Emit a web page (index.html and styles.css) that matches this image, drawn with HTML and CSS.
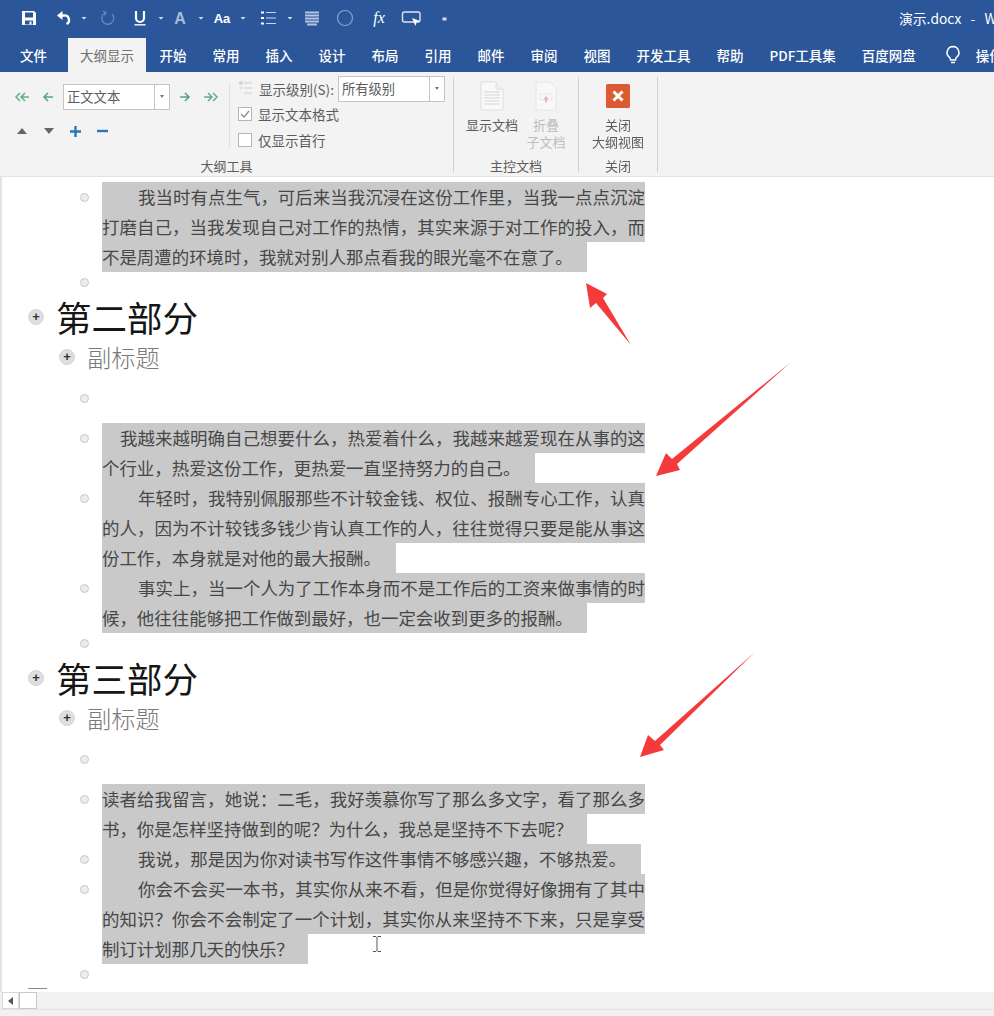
FILE: index.html
```html
<!DOCTYPE html>
<html lang="zh-CN">
<head>
<meta charset="utf-8">
<title>演示.docx - Word</title>
<link rel="stylesheet" href="styles.css">
</head>
<body>
<div class="app">
  <header class="titlebar">
    <svg class="qat" width="460" height="38" viewBox="0 0 460 38">
      <g fill="#fff">
        <path d="M22 11h12l2 2v12H22zM25 12.500v5h8v-5zM25 20.500v4h8v-4z" fill-rule="evenodd"/>
        <rect x="29.500" y="21.500" width="2" height="3" fill="#fff"/>
      </g>
      <path d="M57 15.500l5.500-4.500v9z" fill="#fff"/>
      <path d="M61 15.500h3a4.500 4.500 0 0 1 2.500 8.500" fill="none" stroke="#fff" stroke-width="2.300"/>
      <path d="M81.500 17h5l-2.500 2.500zM158.500 17h5l-2.500 2.500zM198.500 17h5l-2.500 2.500zM240.500 17h5l-2.500 2.500zM287.500 17h5l-2.500 2.500zM442.500 17.500h4v3h-4z" fill="#d5deee"/>
      <path d="M112 14a6 6 0 1 1-6-1.500M103 11l3 1.500-1.500 3" fill="none" stroke="#6a88ba" stroke-width="1.300"/>
      <path d="M136 11v7a4 4 0 0 0 8 0v-7" fill="none" stroke="#fff" stroke-width="2.200"/>
      <rect x="134.500" y="24" width="11" height="1.600" fill="#dfe7f3"/>
      <text x="180" y="23.500" class="qat-a">A</text>
      <text x="222" y="23" class="qat-aa">Aa</text>
      <path d="M261 11.500h3v2h-3zM261 17h3v2h-3zM261 22.500h3v2h-3z" fill="#fff"/>
      <path d="M266 12.500h10M266 18h10M266 23.500h10" stroke="#cdd8ea" stroke-width="1.200"/>
      <path d="M305 12.500h14M305 15.500h14M305 18.500h14M305 21.500h14M307 24.500h10" stroke="#b5c4dd" stroke-width="1.800"/>
      <circle cx="345" cy="18" r="7.500" fill="none" stroke="#8ba4cc" stroke-width="1.200"/>
      <text x="379" y="23" class="qat-fx">fx</text>
      <path d="M404.500 12h13.500a2 2 0 0 1 2 2v6a2 2 0 0 1-2 2h-13.500a2 2 0 0 1-2-2v-6a2 2 0 0 1 2-2z" fill="none" stroke="#dbe3f0" stroke-width="1.400"/>
      <path d="M412 18l8 3-3.500 1.500-1 3.500z" fill="#fff"/>
    </svg>
    <div class="doc-title">演示.docx&nbsp;&nbsp;-&nbsp;&nbsp;Word</div>
  </header>

  <nav class="tabs">
    <span class="tab">文件</span>
    <span class="tab tab-active">大纲显示</span>
    <span class="tab">开始</span>
    <span class="tab">常用</span>
    <span class="tab">插入</span>
    <span class="tab">设计</span>
    <span class="tab">布局</span>
    <span class="tab">引用</span>
    <span class="tab">邮件</span>
    <span class="tab">审阅</span>
    <span class="tab">视图</span>
    <span class="tab">开发工具</span>
    <span class="tab">帮助</span>
    <span class="tab">PDF工具集</span>
    <span class="tab">百度网盘</span>
    <span class="tab tab-search">
      <svg width="16" height="20" viewBox="0 0 16 20"><path d="M8 1.500a6 6 0 0 0-3.500 10.800c.8.8 1 1.500 1 2.700h5c0-1.200.2-1.900 1-2.700A6 6 0 0 0 8 1.500zM6 17.500h4" fill="none" stroke="#fff" stroke-width="1.500"/></svg>
      <span>操作说明搜索</span>
    </span>
  </nav>

  <section class="ribbon">
    <div class="group group-outline">
      <div class="group-body">
        <div class="col-levels">
          <div class="level-row">
            <span class="cell"><svg width="16" height="10" viewBox="0 0 16 10"><path d="M6 1L2 5l4 4M11 1L7 5l4 4M7 5h8" fill="none" stroke="#66ad86" stroke-width="1.500"/></svg></span>
            <span class="cell"><svg width="12" height="10" viewBox="0 0 12 10"><path d="M6 1L2 5l4 4M2 5h9" fill="none" stroke="#58a67c" stroke-width="1.600"/></svg></span>
            <div class="combo combo-style"><span class="combo-text">正文文本</span><span class="combo-btn"></span></div>
            <span class="cell"><svg width="12" height="10" viewBox="0 0 12 10"><path d="M6 1l4 4-4 4M10 5H1" fill="none" stroke="#58a67c" stroke-width="1.600"/></svg></span>
            <span class="cell"><svg width="16" height="10" viewBox="0 0 16 10"><path d="M10 1l4 4-4 4M5 1l4 4-4 4M9 5H1" fill="none" stroke="#66ad86" stroke-width="1.500"/></svg></span>
          </div>
          <div class="move-row">
            <span class="cell"><svg width="10" height="6" viewBox="0 0 10 6"><path d="M5 0l5 6H0z" fill="#666"/></svg></span>
            <span class="cell"><svg width="10" height="6" viewBox="0 0 10 6"><path d="M5 6l5-6H0z" fill="#666"/></svg></span>
            <span class="cell"><svg width="11" height="11" viewBox="0 0 11 11"><path d="M5.500 0v11M0 5.500h11" stroke="#2f74b5" stroke-width="2.400"/></svg></span>
            <span class="cell"><svg width="11" height="4" viewBox="0 0 11 4"><path d="M0 2h11" stroke="#2f74b5" stroke-width="2.400"/></svg></span>
          </div>
        </div>
        <div class="col-display">
          <div class="display-row">
            <svg class="level-icon" width="15" height="17" viewBox="0 0 15 17"><circle cx="3" cy="3" r="2" fill="#d4d4d4"/><path d="M6 3h8M6 8h8M6 13h8" stroke="#dcdcdc" stroke-width="1.400"/><circle cx="3" cy="8" r="1.500" fill="#e0e0e0"/></svg>
            <span class="rb-text">显示级别(S):</span>
            <div class="combo combo-level"><span class="combo-text">所有级别</span><span class="combo-btn"></span></div>
          </div>
          <label class="check-row"><span class="check"><svg width="12" height="12" viewBox="0 0 12 12"><path d="M2 6l3 3 5-6" fill="none" stroke="#8a8a8a" stroke-width="1.200"/></svg></span><span class="rb-text">显示文本格式</span></label>
          <label class="check-row"><span class="check"></span><span class="rb-text">仅显示首行</span></label>
        </div>
      </div>
      <div class="group-label">大纲工具</div>
    </div>

    <div class="group group-master">
      <div class="group-body">
        <div class="big-btn btn-show">
          <span class="big-icon"><svg width="24" height="30" viewBox="0 0 24 30"><path d="M1 1h15l7 7v21H1z" fill="#f9f9f9" stroke="#dedede"/><path d="M16 1v7h7" fill="#efefef" stroke="#dedede"/><path d="M4 11h16M4 14h16M4 17h16M4 20h16M4 23h16" stroke="#dde1e6" stroke-width="1.500"/></svg></span>
          <span class="big-text">显示文档</span>
        </div>
        <div class="big-btn btn-fold">
          <span class="big-icon"><svg width="22" height="30" viewBox="0 0 22 30"><path d="M1 1h14l6 6v22H1z" fill="#f8f8f8" stroke="#e6e6e6"/><path d="M5 13h12v6H5z" fill="none" stroke="#e6e6e6"/><path d="M11 15l3 3.500h-2v3h-2v-3H8z" fill="#d9b9b9"/></svg></span>
          <span class="big-text">折叠<br>子文档</span>
        </div>
      </div>
      <div class="group-label">主控文档</div>
    </div>

    <div class="group group-close">
      <div class="group-body">
        <div class="big-btn btn-close">
          <span class="big-icon"><svg width="24" height="24" viewBox="0 0 24 24"><rect width="24" height="24" rx="1.500" fill="#dc5b33"/><path d="M7.500 7.500l9 9M16.500 7.500l-9 9" stroke="#fff" stroke-width="3"/></svg></span>
          <span class="big-text">关闭<br>大纲视图</span>
        </div>
      </div>
      <div class="group-label">关闭</div>
    </div>
  </section>

  <main class="document">
    <div class="row body-row">
      <span class="dot"></span>
      <div class="para">
        <div class="ln full i2">我当时有点生气，可后来当我沉浸在这份工作里，当我一点点沉淀</div>
        <div class="ln full">打磨自己，当我发现自己对工作的热情，其实来源于对工作的投入，而</div>
        <div class="ln">不是周遭的环境时，我就对别人那点看我的眼光毫不在意了。</div>
      </div>
    </div>
    <div class="row empty-row"><span class="dot"></span></div>

    <h1 class="row h1-row"><span class="plus"></span>第二部分</h1>
    <h2 class="row h2-row"><span class="plus"></span>副标题</h2>
    <div class="row empty-row spaced"><span class="dot"></span></div>

    <div class="row body-row">
      <span class="dot"></span>
      <div class="para">
        <div class="ln full i1">我越来越明确自己想要什么，热爱着什么，我越来越爱现在从事的这</div>
        <div class="ln">个行业，热爱这份工作，更热爱一直坚持努力的自己。</div>
      </div>
    </div>
    <div class="row body-row">
      <span class="dot"></span>
      <div class="para">
        <div class="ln full i2">年轻时，我特别佩服那些不计较金钱、权位、报酬专心工作，认真</div>
        <div class="ln full">的人，因为不计较钱多钱少肯认真工作的人，往往觉得只要是能从事这</div>
        <div class="ln">份工作，本身就是对他的最大报酬。</div>
      </div>
    </div>
    <div class="row body-row">
      <span class="dot"></span>
      <div class="para">
        <div class="ln full i2">事实上，当一个人为了工作本身而不是工作后的工资来做事情的时</div>
        <div class="ln">候，他往往能够把工作做到最好，也一定会收到更多的报酬。</div>
      </div>
    </div>
    <div class="row empty-row"><span class="dot"></span></div>

    <h1 class="row h1-row"><span class="plus"></span>第三部分</h1>
    <h2 class="row h2-row"><span class="plus"></span>副标题</h2>
    <div class="row empty-row spaced"><span class="dot"></span></div>

    <div class="row body-row">
      <span class="dot"></span>
      <div class="para">
        <div class="ln full">读者给我留言，她说：二毛，我好羡慕你写了那么多文字，看了那么多</div>
        <div class="ln">书，你是怎样坚持做到的呢？为什么，我总是坚持不下去呢？</div>
      </div>
    </div>
    <div class="row body-row">
      <span class="dot"></span>
      <div class="para">
        <div class="ln i2">我说，那是因为你对读书写作这件事情不够感兴趣，不够热爱。</div>
      </div>
    </div>
    <div class="row body-row">
      <span class="dot"></span>
      <div class="para">
        <div class="ln full i2">你会不会买一本书，其实你从来不看，但是你觉得好像拥有了其中</div>
        <div class="ln full">的知识？你会不会制定了一个计划，其实你从来坚持不下来，只是享受</div>
        <div class="ln">制订计划那几天的快乐？</div>
      </div>
    </div>
    <div class="row empty-row"><span class="dot"></span></div>
    <div class="doc-end"></div>

    <svg class="overlay" width="994" height="815" viewBox="0 177 994 815">
      <path d="M586 283L607 294L603 298L631 345L596 303L590 308Z" fill="#f43a3a"/>
      <path d="M791 362L672 459L666 453L656 476L680 470L677 464Z" fill="#f43a3a"/>
      <path d="M755 652L655 741L648 735L640 757L664 750L660 745Z" fill="#f43a3a"/>
      <path d="M373 936.500h3l1 1 1-1h3M377 937.500v13M373 951.500h3l1-1 1 1h3" fill="none" stroke="#555" stroke-width="1"/>
    </svg>
  </main>

  <footer class="statusbar">
    <div class="scroll">
      <span class="scroll-btn"><svg width="5" height="8" viewBox="0 0 5 8"><path d="M5 0v8L0 4z" fill="#555"/></svg></span>
      <span class="scroll-thumb"></span>
    </div>
  </footer>
</div>
</body>
</html>
```
FILE: styles.css
```css
* { box-sizing: border-box; }

html, body {
  margin: 0;
  padding: 0;
  background: #fff;
}

.app {
  width: 994px;
  height: 1016px;
  overflow: hidden;
  display: flex;
  flex-direction: column;
  font-family: "Noto Sans CJK SC", "Noto Sans", sans-serif;
  filter: blur(0.55px);
}

/* Title bar */
.titlebar {
  flex: none;
  height: 38px;
  background: #2b5699;
  display: flex;
  align-items: flex-start;
  justify-content: space-between;
}

.qat { display: block; flex: none; }

.qat-a {
  font: bold 16px "Liberation Sans", sans-serif;
  fill: #a9bbd9;
  text-anchor: middle;
}

.qat-aa {
  font: bold 13px "Liberation Sans", sans-serif;
  fill: #fff;
  text-anchor: middle;
}

.qat-fx {
  font: italic 16px "Liberation Serif", serif;
  fill: #fff;
  text-anchor: middle;
}

.doc-title {
  width: 95px;
  height: 38px;
  line-height: 37px;
  font-size: 13.800px;
  word-spacing: 1.500px;
  color: #fff;
  white-space: nowrap;
  overflow: hidden;
}

/* Tabs */
.tabs {
  flex: none;
  height: 34px;
  background: #2b5699;
  display: flex;
  padding-left: 7px;
  white-space: nowrap;
}

.tab {
  padding: 0 13px;
  font-size: 13.500px;
  line-height: 34px;
  color: #fff;
  font-weight: 500;
}

.tab-active {
  margin: 0 0.500px 0 8px;
  padding: 0 12px;
  background: #f3f3f3;
  color: #6f6f6f;
  font-weight: 400;
}

.tab-search {
  display: flex;
  align-items: center;
  gap: 15px;
  padding-left: 16px;
}

/* Ribbon */
.ribbon {
  flex: none;
  height: 105px;
  padding-top: 5px;
  background: #f3f3f3;
  border-bottom: 1px solid #e2e2e2;
  display: flex;
  align-items: flex-start;
  color: #5c5c5c;
  font-size: 13px;
}

.group {
  height: 95px;
  display: flex;
  flex-direction: column;
  border-right: 1px solid #d2d2d2;
}

.group-outline { width: 454px; }
.group-master { width: 125px; }
.group-close { width: 79px; }

.group-body {
  height: 81px;
  display: flex;
}

.group-label {
  height: 14px;
  line-height: 16px;
  text-align: center;
  color: #5c5c5c;
}

.col-levels {
  width: 230px;
  height: 63px;
  margin-top: 7px;
  border-right: 1px solid #dedede;
}

.level-row {
  display: flex;
  align-items: center;
  height: 26px;
  padding-left: 9px;
}

.cell {
  flex: none;
  width: 26px;
  height: 26px;
  display: flex;
  align-items: center;
  justify-content: center;
}

.move-row {
  display: flex;
  margin-top: 8px;
  padding-left: 8px;
}

.move-row .cell { width: 27px; }

.combo {
  display: flex;
  flex: none;
  width: 107px;
  background: #fff;
  border: 1px solid #c4c4c4;
  color: #5c5c5c;
}

.combo-style {
  height: 26px;
  margin: 0 2px;
}

.combo-level { height: 26px; margin-left: 4px; }

.combo-text {
  flex: 1;
  padding-left: 3px;
  line-height: 24px;
  font-size: 13.300px;
}

.combo-btn {
  flex: none;
  width: 15px;
  border-left: 1px solid #c4c4c4;
  position: relative;
}

.combo-btn::after {
  content: "";
  position: absolute;
  top: 10px;
  left: 5px;
  border: 2px solid transparent;
  border-top: 3px solid #777;
}

.col-display {
  flex: none;
  padding-left: 8px;
}

.display-row {
  display: flex;
  align-items: center;
  height: 25px;
  margin-top: -1px;
}

.level-icon { margin-right: 6px; }

.rb-text {
  font-size: 13.500px;
  white-space: nowrap;
}

.check-row {
  display: flex;
  align-items: center;
  gap: 6px;
  height: 26px;
}

.check {
  flex: none;
  width: 14px;
  height: 14px;
  background: #fff;
  border: 1px solid #b5b5b5;
  display: flex;
  align-items: center;
  justify-content: center;
}

.big-btn {
  display: flex;
  flex-direction: column;
  align-items: center;
  padding-top: 4px;
}

.big-icon {
  height: 30px;
  display: flex;
  align-items: center;
}

.big-text {
  margin-top: 5px;
  text-align: center;
  font-size: 13px;
  line-height: 17px;
  white-space: nowrap;
}

.btn-show { width: 60px; margin-left: 8px; }
.btn-fold { width: 48px; color: #bdbdbd; }
.btn-close { width: 78px; }

/* Document */
.document {
  flex: 1;
  min-height: 0;
  position: relative;
  background: #fff;
  border-left: 2px solid #e4e4e4;
  padding-top: 5px;
}

.row {
  display: flex;
  margin: 0;
  font-weight: 400;
}

.body-row { padding-left: 78px; }

.empty-row {
  height: 20px;
  padding-left: 78px;
  align-items: center;
}

.spaced { margin-bottom: 15px; }

.dot {
  flex: none;
  width: 9px;
  height: 9px;
  margin-right: 13px;
  border-radius: 50%;
  background: #ececec;
  border: 1.500px solid #c9c9c9;
}

.body-row .dot { margin-top: 11px; }

.para {
  width: 543px;
  font-size: 17.450px;
  line-height: 30px;
  color: #474747;
}

.ln {
  width: fit-content;
  height: 30px;
  padding-right: 14.500px;
  background: #c9c9c9;
  white-space: nowrap;
}

.ln.full {
  width: 543px;
  padding-right: 0;
  white-space: normal;
  text-align: justify;
  text-align-last: justify;
}

.ln.i1 { padding-left: 18px; }
.ln.i2 { padding-left: 36px; }

.plus {
  flex: none;
  width: 16px;
  height: 16px;
  border-radius: 50%;
  background: #dedede;
  border: 1px solid #d6d6d6;
  position: relative;
}

.plus::before {
  content: "+";
  position: absolute;
  inset: 0;
  text-align: center;
  font: bold 13px/14px "Liberation Sans", sans-serif;
  color: #333;
}

.h1-row {
  height: 50px;
  align-items: center;
  padding-left: 26px;
  font-size: 35.500px;
  line-height: 48px;
  color: #151515;
}

.h1-row .plus { margin-right: 12px; }

.h2-row {
  height: 46px;
  padding: 0 0 16px 57px;
  align-items: center;
  font-size: 24.300px;
  line-height: 30px;
  font-weight: 300;
  color: #7a7a7a;
}

.h2-row .plus { margin-right: 12px; }

.doc-end {
  position: absolute;
  left: 26px;
  bottom: 3px;
  width: 19px;
  height: 1px;
  background: #8a8a8a;
}

.overlay {
  position: absolute;
  left: -2px;
  top: 0;
  pointer-events: none;
}

/* Status bar */
.statusbar {
  flex: none;
  height: 24px;
  background: #f1f1f1;
}

.scroll {
  display: flex;
  height: 18px;
  padding-left: 2px;
  border-bottom: 1px solid #e3e3e3;
}

.scroll-btn {
  width: 17px;
  display: flex;
  align-items: center;
  justify-content: center;
  background: #fff;
  border: 1px solid #d8d8d8;
}

.scroll-thumb {
  width: 18px;
  background: #fff;
  border: 1px solid #c8c8c8;
}
```
